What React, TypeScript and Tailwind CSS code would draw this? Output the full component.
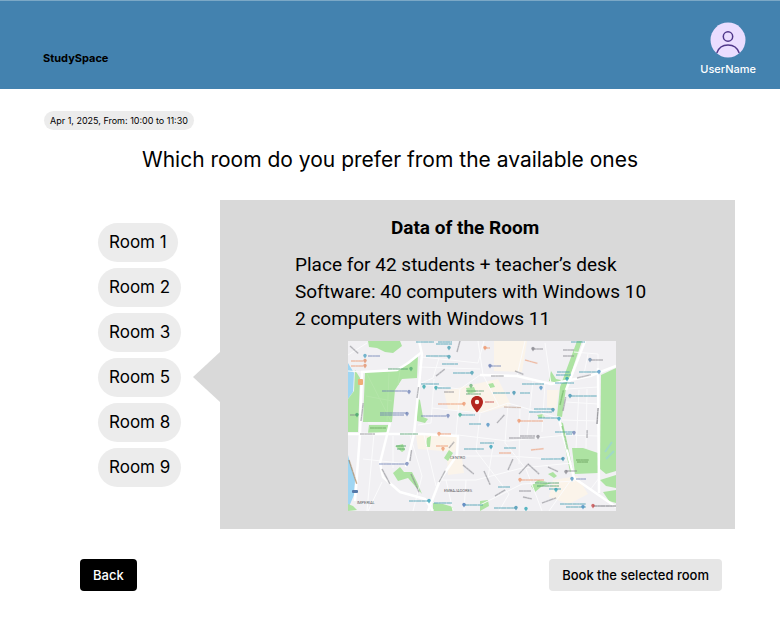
import { useState } from "react";

const rooms = [1, 2, 3, 5, 8, 9];

type Label = [x: number, y: number, width: number, color: string, rotate?: number];
type Pin = [x: number, y: number, color: string];

const TEAL = "#3f9bb0";
const BLUE = "#6b7fb5";
const ORANGE = "#ee9468";
const GREY = "#85858c";

const labels: Label[] = [
  [68, 1, 18, TEAL], [90, 1, 14, TEAL], [88, 3, 16, TEAL], [78, 15, 22, TEAL], [94, 23, 16, TEAL],
  [20, 15, 12, BLUE], [3, 20, 12, ORANGE], [3, 25, 12, ORANGE], [40, 28, 20, "#4b9b66"],
  [105, 32, 18, TEAL], [73, 43, 18, TEAL], [90, 47, 13, TEAL], [96, 51, 10, GREY], [34, 50, 25, BLUE],
  [90, 63, 26, ORANGE], [32, 72, 27, BLUE], [32, 74, 24, BLUE], [73, 75, 25, BLUE], [113, 74, 14, TEAL],
  [121, 83, 12, TEAL], [2, 74, 8, GREY], [12, 93, 15, GREY], [52, 93, 18, "#4b9b66"], [22, 87, 16, "#6aa75e"],
  [92, 93, 11, ORANGE], [88, 105, 12, ORANGE], [116, 108, 20, TEAL], [48, 105, 10, "#4b9b66"],
  [49, 108, 8, "#4b9b66"], [31, 123, 27, BLUE], [61, 160, 19, TEAL], [86, 162, 18, TEAL], [117, 164, 18, TEAL],
  [118, 50, 18, "#5b9c70"], [118, 53, 15, "#5b9c70"], [136, 7, 6, ORANGE], [184, 8, 11, GREY],
  [223, 1, 14, TEAL], [215, 9, 11, GREY], [215, 15, 11, GREY], [141, 25, 12, BLUE], [143, 35, 13, GREY],
  [243, 19, 12, GREY], [231, 31, 19, TEAL], [209, 31, 13, TEAL], [208, 34, 15, TEAL], [207, 42, 19, TEAL],
  [174, 43, 22, TEAL], [145, 52, 17, TEAL], [172, 52, 10, TEAL], [223, 55, 26, TEAL], [137, 61, 9, "#c54444"],
  [186, 68, 18, TEAL], [181, 71, 23, TEAL], [190, 77, 20, TEAL], [171, 80, 24, ORANGE], [207, 91, 18, TEAL],
  [218, 93, 6, TEAL], [172, 95, 15, GREY], [161, 97, 26, GREY], [132, 102, 14, TEAL], [156, 107, 12, TEAL],
  [151, 112, 12, ORANGE], [193, 118, 22, TEAL], [218, 130, 11, GREY], [228, 138, 10, BLUE],
  [173, 139, 23, ORANGE], [187, 142, 24, "#4b9b66"], [189, 145, 22, "#4b9b66"], [201, 148, 12, TEAL],
  [150, 146, 12, TEAL], [171, 150, 12, GREY], [146, 167, 21, TEAL], [212, 163, 26, TEAL], [218, 166, 20, TEAL],
  [245, 165, 24, "#65656d"], [228, 119, 13, "#679d59"], [229, 121, 11, "#679d59"],
  [2, 5, 11, GREY, 42], [13, 80, 18, GREY, -83], [69, 57, 11, GREY, -82], [62, 120, 11, GREY, -82],
  [88, 35, 11, GREY, -38], [109, 11, 12, GREY, -75], [34, 128, 17, GREY, 62], [63, 133, 20, GREY, 66],
  [91, 141, 13, GREY, -61], [101, 107, 8, GREY, -50], [115, 124, 14, GREY, 40], [1, 119, 25, "#9a7041", 72],
  [177, 19, 13, ORANGE, 15], [167, 30, 9, GREY, 22], [229, 37, 14, GREY, -13], [156, 66, 17, "#c2a28f", 2],
  [149, 82, 11, GREY, -48], [215, 70, 14, GREY, -79], [249, 83, 16, "#54545c", -86], [212, 64, 15, "#68ac5e", -77],
  [214, 85, 24, "#6ab761", 77], [239, 97, 8, GREY, -89], [183, 109, 13, ORANGE, -6], [160, 129, 12, GREY, -66],
  [136, 130, 15, GREY, 66], [171, 133, 14, GREY, -47], [180, 123, 15, GREY, 42], [200, 126, 11, GREY, 25],
  [147, 155, 12, GREY, -31], [194, 162, 15, GREY, -20], [175, 156, 9, GREY, 12],
];

const pins: Pin[] = [
  [17, 15, "#4a9fc0"], [17, 20, "#e18a62"], [17, 25, "#e18a62"], [63, 28, "#50a970"], [101, 7, TEAL],
  [101, 16, TEAL], [124, 32, TEAL], [76, 46, "#26a2a8"], [88, 47, "#26a2a8"], [61, 51, BLUE],
  [59, 73, BLUE], [100, 75, BLUE], [112, 74, "#35a98d"], [116, 63, ORANGE], [123, 45, "#66b173"],
  [91, 93, ORANGE], [95, 108, ORANGE], [59, 123, BLUE], [81, 160, "#269cb6"], [116, 164, "#386eb5"],
  [9, 74, "#45a66a"], [137, 7, ORANGE], [142, 25, BLUE], [185, 8, GREY], [242, 19, "#6685a5"],
  [251, 31, "#458dc2"], [219, 38, "#269cb6"], [193, 47, "#458dc2"], [166, 52, "#358eae"],
  [222, 55, "#358eae"], [205, 69, "#358eae"], [211, 78, "#269cb6"], [140, 84, "#458dc2"],
  [171, 80, ORANGE], [190, 96, GREY], [226, 92, BLUE], [143, 106, "#269cb6"], [215, 118, "#358eae"],
  [218, 131, GREY], [224, 138, "#458dc2"], [172, 139, ORANGE], [208, 149, "#26a2b2"],
  [168, 167, "#358eae"], [178, 168, "#26a2b2"], [235, 166, "#458dc2"], [245, 165, "#c64242"],
];

const greens = [
  "20,0 52,0 54,5 45,12 37,11 29,7 21,6",
  "17,31 49,30 60,22 70,14 69,37 54,38 47,49 44,81 15,81",
  "7,29 12,37 10,91 0,91 0,58 6,50",
  "21,84 40,84 40,91 20,92",
  "69,57 72,59 75,76 80,78 77,82 69,80",
  "45,132 52,126 56,131 64,131 69,141 74,153 60,137 50,140",
  "47,105 55,103 57,109 54,111",
  "85,162 95,163 105,166 105,170 85,170",
  "96,117 101,109 105,112 100,120",
  "79,97 83,95 82,106 78,106",
  "118,47 126,46 128,51 120,53",
  "229,0 234,0 218,47 214,76 209,75 212,46",
  "203,30 208,38 213,39 211,42 201,40",
  "212,81 215,82 225,129 222,131",
  "253,34 268,27 268,130 258,133 252,128",
  "224,107 235,107 250,112 250,132 227,133",
  "252,139 268,134 268,147 258,145",
  "255,151 268,149 268,162 261,160",
  "183,145 190,139 203,142 193,146 187,151",
  "200,133 205,131 209,135 206,137",
  "132,160 140,159 141,165 132,170",
  "140,43 145,42 147,46 142,47",
  "189,74 195,73 197,77 191,77",
  "0,163 5,165 9,169 0,170",
];

const mainRoads = [
  "M13 31 L49 29 L60 22 L74 11 M14 30 L12 93 L7 160",
  "M0 93 H75 L110 95 L109 114 L92 139 L80 170",
  "M71 0 L74 13 L70 54 L66 93 L58 126",
  "M42 82 L32 122 L35 136 L52 151 L77 158 L85 170",
  "M132 34 L169 35 L203 43 L242 35 L268 25",
  "M250 27 L251 152",
  "M237 0 L218 49",
  "M211 78 L226 137 L268 166",
];

const streets =
  "M0 14 L19 2 M0 30 L13 31 M20 82 L42 82 M15 118 L61 123 M26 93 L19 170 M45 95 L45 127 M62 94 L74 135 L65 170 M76 94 L88 145 M74 16 L130 22 L136 0 M91 17 L85 37 L71 43 L112 48 L132 34 M86 38 L83 82 L70 84 M112 48 L108 94 M84 67 L132 72 L160 62 L211 77 M110 94 L160 100 L218 94 M132 73 L128 110 L161 153 L151 170 M160 62 L157 102 L178 128 L194 170 M109 115 L161 115 L219 119 M92 139 L128 139 L174 127 L224 122 M130 0 L135 34 L151 65 M169 35 L177 0 M203 43 L197 2 M185 39 L179 96 M197 42 L194 91 M219 48 L250 46 M218 61 L250 63 M214 79 L250 80 M218 94 L250 95 M231 49 L228 107 M239 48 L238 107 M226 11 L250 13 L250 28 M240 13 L236 33 M225 136 L201 170 M227 140 L174 143 L132 164 M251 137 L242 149 M98 139 L105 170 M118 139 L116 170 M34 141 L20 170 M172 66 L171 123 M145 105 L140 137 M71 26 L132 28";

function RoomMap() {
  return (
    <svg
      viewBox="0 0 268 170"
      role="img"
      aria-label="Map with the location of the room"
      className="block h-[170px] w-[268px] shrink-0"
    >
      <rect width="268" height="170" fill="#f1f0f3" />
      <g fill="#fbf4ea">
        <path d="M146 0 L179 0 L174 31 L146 30 Z" />
        <path d="M96 50 L150 38 L163 64 L134 72 L100 68 Z" />
        <path d="M99 115 L114 118 L116 132 L100 134 Z" />
        <path d="M205 139 L229 135 L240 153 L221 163 L201 156 Z" />
        <path d="M199 49 L211 49 L208 68 L199 66 Z" />
        <path d="M68 94 L111 95 L107 111 L70 108 Z" />
      </g>
      <path d="M0 22 L6 32 L5 51 L0 58 Z M0 114 L2 122 L7 139 L6 154 L0 168 Z" fill="#9fd6f3" />
      <g fill="#ade3a2">
        {greens.map((points) => (
          <polygon key={points} points={points} />
        ))}
      </g>
      <path d="M41 32 L39 80 M18 55 L44 60 M19 33 L43 80 M52 29 L50 44" stroke="#b5e6aa" strokeWidth="1" fill="none" />
      <path d="M257 111 L264 101 M258 118 L266 110" stroke="#a1d8c6" strokeWidth="2" />
      <path d={streets} fill="none" stroke="#fbfbfc" strokeWidth="1" />
      <g fill="none" stroke="#ffffff" strokeWidth="2.500" strokeLinejoin="round">
        {mainRoads.map((d) => (
          <path key={d} d={d} />
        ))}
      </g>
      <rect x="10" y="38" width="5" height="6" rx="1" fill="#efad76" />
      <rect x="4" y="149" width="6" height="3" rx="1" fill="#5579a8" />
      {labels.map(([x, y, width, color, rotate = 0], index) => (
        <g
          key={index}
          stroke={color}
          transform={`rotate(${rotate} ${x} ${y})`}
        >
          <line x1={x} y1={y} x2={x + width} y2={y} strokeWidth="1.800" opacity=".22" />
          <line x1={x} y1={y} x2={x + width} y2={y} strokeWidth="1" strokeDasharray="4 .4 2.5 .3 5 .6" opacity=".5" />
        </g>
      ))}
      {pins.map(([x, y, color], index) => (
        <g key={index} fill={color} opacity=".75">
          <circle cx={x} cy={y - 0.5} r="1.700" />
          <path d={`M${x - 1.3} ${y + 0.3} L${x} ${y + 2.4} L${x + 1.3} ${y + 0.3} Z`} />
        </g>
      ))}
      <g fill="#5d5d63" fontFamily="Roboto, sans-serif" fontSize="4">
        <text x="102" y="118">CENTRO</text>
        <text x="96" y="151">EMBAJADORES</text>
        <text x="9" y="163">IMPERIAL</text>
      </g>
      <path
        fillRule="evenodd"
        fill="#b3261e"
        d="M129 55 C125.500 55 123 57.600 123 61 C123 65.300 129 71.500 129 71.500 C129 71.500 135 65.300 135 61 C135 57.600 132.500 55 129 55 Z M129 58.800 A2.200 2.200 0 1 1 129 63.200 A2.200 2.200 0 1 1 129 58.800 Z"
      />
    </svg>
  );
}

function Avatar() {
  return (
    <svg viewBox="0 0 36 36" className="size-9" aria-hidden="true">
      <circle cx="18" cy="18" r="17.500" fill="#eaddff" />
      <g fill="none" stroke="#4f378a" strokeWidth="1.500">
        <circle cx="18" cy="14.500" r="4.700" />
        <path d="M6.800 31 C8.500 26 12.500 23 18 23 C23.500 23 27.500 26 29.200 31" />
      </g>
    </svg>
  );
}

export default function App() {
  const [selected, setSelected] = useState(5);

  return (
    <div className="min-h-screen bg-white font-['Inter',sans-serif] text-black">
      <header className="flex h-[89px] items-start justify-between border-t border-[#7ba8c6] bg-[#4382af] pr-6 pl-[43px]">
        <span className="mt-[49px] text-[11px] leading-4 font-bold">StudySpace</span>
        <button type="button" className="mt-[21px] flex flex-col items-center text-[11px] leading-4 font-medium text-white">
          <Avatar />
          <span className="mt-[3px]">UserName</span>
        </button>
      </header>

      <main className="pt-[22px]">
        <p className="ml-11 w-fit rounded-full bg-[#ececec] px-[6px] text-[9px] leading-[19px]">
          Apr 1, 2025, From: 10:00 to 11:30
        </p>
        <h1 className="mt-[14px] text-center text-[21px] leading-8">
          Which room do you prefer from the available ones
        </h1>

        <div className="mt-6 flex pr-[45px] pl-[98px]">
          <nav aria-label="Available rooms" className="flex w-[95px] shrink-0 flex-col items-start gap-[6px] pt-[23px]">
            {rooms.map((room) => (
              <button
                key={room}
                type="button"
                aria-pressed={selected === room}
                onClick={() => setSelected(room)}
                className="rounded-full bg-[#ececec] px-[11px] text-[17px] leading-[39px] whitespace-nowrap"
              >
                Room {room}
              </button>
            ))}
          </nav>
          <svg viewBox="0 0 27 50" className="mt-[152px] h-[50px] w-[27px] shrink-0" aria-hidden="true">
            <path d="M27 0 V50 L0 25 Z" fill="#d9d9d9" />
          </svg>
          <section className="flex min-w-0 flex-1 flex-col bg-[#d9d9d9] pt-[14px] pr-[100px] pb-[18px] pl-[75px] font-['Roboto',sans-serif] text-[19px] leading-[27px]">
            <h2 className="text-center font-bold">Data of the Room</h2>
            <div className="mt-[10px] whitespace-nowrap">
              <p>Place for 42 students + teacher’s desk</p>
              <p>Software: 40 computers with Windows 10</p>
              <p>2 computers with Windows 11</p>
            </div>
            <div className="mt-[9px] pl-[53px]">
              <RoomMap />
            </div>
          </section>
        </div>

        <div className="mt-[30px] flex justify-between pr-[58px] pb-10 pl-20 text-[13px] leading-4 font-medium">
          <button type="button" className="rounded bg-black px-[13px] py-2 text-white">
            Back
          </button>
          <button type="button" className="rounded bg-[#e6e6e6] px-[13px] py-2">
            Book the selected room
          </button>
        </div>
      </main>
    </div>
  );
}
